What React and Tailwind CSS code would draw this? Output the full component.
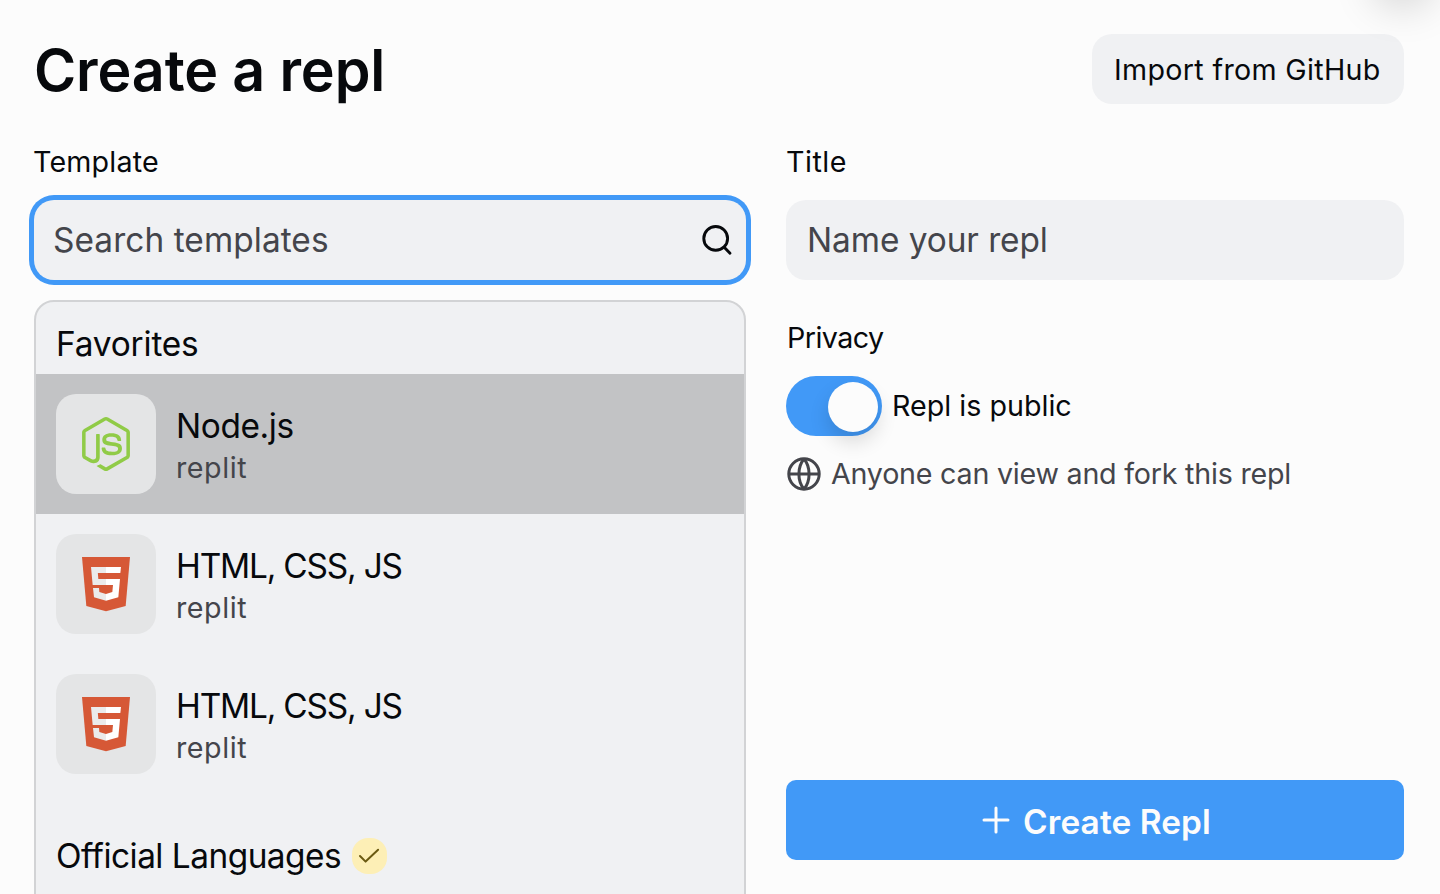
import React from "react";
import { SiNodedotjs } from "react-icons/si";

function Html5Logo() {
  return (
    <svg viewBox="18 18 300 300" className="size-[100px]">
      <polygon points="96,87 240,87 227,234 168,250 109,234" fill="#d65836" />
      <polygon points="168,117 123,117 128,171 168,171 168,153 145,153 143.500,135 168,135" fill="#ebebeb" />
      <polygon points="168,198 148,192 147,180 129,180 132,208 168,218" fill="#ebebeb" />
      <polygon points="168,117 213,117 211,135 168,135" fill="#ffffff" />
      <polygon points="168,153 210,153 205,208 168,218 168,198 187,192 189,171 168,171" fill="#ffffff" />
    </svg>
  );
}

function SearchIcon() {
  return (
    <svg viewBox="0 0 40 40" fill="none" stroke="#07090c" strokeWidth="2.900" strokeLinecap="round" className="size-10">
      <circle cx="18.700" cy="18.400" r="11.900" />
      <path d="M27.200 27.200 33 33.200" />
    </svg>
  );
}

function GlobeIcon() {
  return (
    <svg viewBox="0 0 36 36" fill="none" stroke="#44454b" strokeWidth="3" className="size-9">
      <circle cx="18" cy="18" r="15.200" />
      <path d="M2.700 18h30.600M18 2.700c-6.800 8.500-6.800 22 0 30.600M18 2.700c6.800 8.500 6.800 22 0 30.600" />
    </svg>
  );
}

function PlusIcon() {
  return (
    <svg viewBox="0 0 28 28" fill="none" stroke="#fcfcfc" strokeWidth="3" strokeLinecap="round" className="size-7">
      <path d="M14 2v24M2 14h24" />
    </svg>
  );
}

function CheckBadge() {
  return (
    <span className="flex h-9 w-[35px] items-center justify-center rounded-2xl bg-[#fdefb6]">
      <svg viewBox="0 0 35 36" fill="none" stroke="#6b5a12" strokeWidth="2" strokeLinecap="round" strokeLinejoin="round" className="h-9 w-[35px]">
        <path d="M8 18 13.600 23.600 26.100 11.800" />
      </svg>
    </span>
  );
}

function TemplateRow({ name, tracking, logo, active }) {
  return (
    <li className={active ? "flex h-[140px] items-center gap-5 bg-[#c2c3c5] px-5" : "flex h-[140px] items-center gap-5 px-5"}>
      <span className="flex size-[100px] items-center justify-center rounded-[20px] bg-[#e4e5e6]">{logo}</span>
      <span className="flex flex-col pt-[5px]">
        <span className={`text-[33.400px] leading-[43px] ${tracking}`}>{name}</span>
        <span className="text-[28.650px] leading-10 tracking-[0.550px] text-[#44454b]">replit</span>
      </span>
    </li>
  );
}

export default function App() {
  return (
    <div className="relative flex h-[894px] w-[1440px] flex-col overflow-hidden bg-[#fcfcfc] pr-9 pl-[34px] font-[Inter,sans-serif] text-[#07090c]">
      <div className="absolute -top-[60px] left-[1378px] h-10 w-[50px] rounded-full shadow-[0_20px_40px_6px_rgba(0,0,0,0.17)]" />

      <header className="flex h-[138px] shrink-0 items-start justify-between pt-[34px]">
        <h1 className="text-[57.300px] leading-[73px] font-semibold tracking-[-0.100px]">Create a repl</h1>
        <button className="h-[70px] w-[312px] rounded-[20px] bg-[#f0f1f3] pt-0.5 pl-[22px] text-left text-[28.650px] tracking-[0.330px]">
          Import from GitHub
        </button>
      </header>

      <main className="flex min-h-0 flex-1 gap-10">
        <section className="flex w-[712px] flex-col">
          <label className="-ml-px h-[62px] shrink-0 text-[28.650px] leading-[48px] tracking-[0.190px]">Template</label>
          <div className="flex h-20 shrink-0 items-center justify-between rounded-[20px] bg-[#f0f1f3] pr-[9px] pl-[19px] shadow-[0_0_0_5px_#4199f7]">
            <span className="text-[33.400px] leading-10 tracking-[0.070px] text-[#44454b]">Search templates</span>
            <SearchIcon />
          </div>
          <div className="mt-5 h-[620px] shrink-0 rounded-[20px] border-2 border-[#d2d3d5] bg-[#f0f1f3]">
            <h2 className="h-[72px] pl-5 text-[33.400px] leading-[84px] tracking-[-0.180px]">Favorites</h2>
            <ul>
              <TemplateRow name="Node.js" tracking="tracking-[-0.400px]" active logo={<SiNodedotjs className="size-[54px] text-[#90cb47]" />} />
              <TemplateRow name="HTML, CSS, JS" tracking="tracking-[-1.180px]" logo={<Html5Logo />} />
              <TemplateRow name="HTML, CSS, JS" tracking="tracking-[-1.180px]" logo={<Html5Logo />} />
            </ul>
            <div className="flex items-center pt-10 pl-5">
              <h2 className="w-[296px] text-[33.400px] leading-[44px] tracking-[-0.510px]">Official Languages</h2>
              <CheckBadge />
            </div>
          </div>
        </section>

        <section className="flex flex-1 flex-col">
          <label className="h-[62px] text-[28.650px] leading-[48px] tracking-[0.500px]">Title</label>
          <div className="flex h-20 shrink-0 items-center rounded-[20px] bg-[#f0f1f3] pl-[21px]">
            <span className="text-[33.400px] leading-10 tracking-[-0.070px] text-[#44454b]">Name your repl</span>
          </div>
          <h3 className="mt-[38px] pl-px text-[28.650px] leading-10 tracking-[-0.550px]">Privacy</h3>
          <div className="mt-[18px] flex h-[60px] items-center gap-2.5">
            <span className="flex h-[60px] w-24 items-center justify-end rounded-full bg-[#4199f7] pt-0.5 pr-1">
              <span className="size-[50px] rounded-full bg-[#fcfcfc] shadow-[0_10px_20px_rgba(0,0,0,0.14)]" />
            </span>
            <span className="text-[28.650px] leading-10 tracking-[0.010px]">Repl is public</span>
          </div>
          <div className="mt-[18px] flex h-10 items-center gap-[9px] text-[#44454b]">
            <GlobeIcon />
            <span className="text-[28.650px] leading-10 tracking-[-0.220px]">Anyone can view and fork this repl</span>
          </div>
          <button className="mt-auto mb-[34px] flex h-20 shrink-0 items-center justify-center gap-[13px] rounded-[10px] bg-[#4199f7] pl-[3px] text-[#fcfcfc]">
            <PlusIcon />
            <span className="pt-[3px] text-[33.400px] leading-10 font-semibold tracking-[0.100px]">Create Repl</span>
          </button>
        </section>
      </main>
    </div>
  );
}
